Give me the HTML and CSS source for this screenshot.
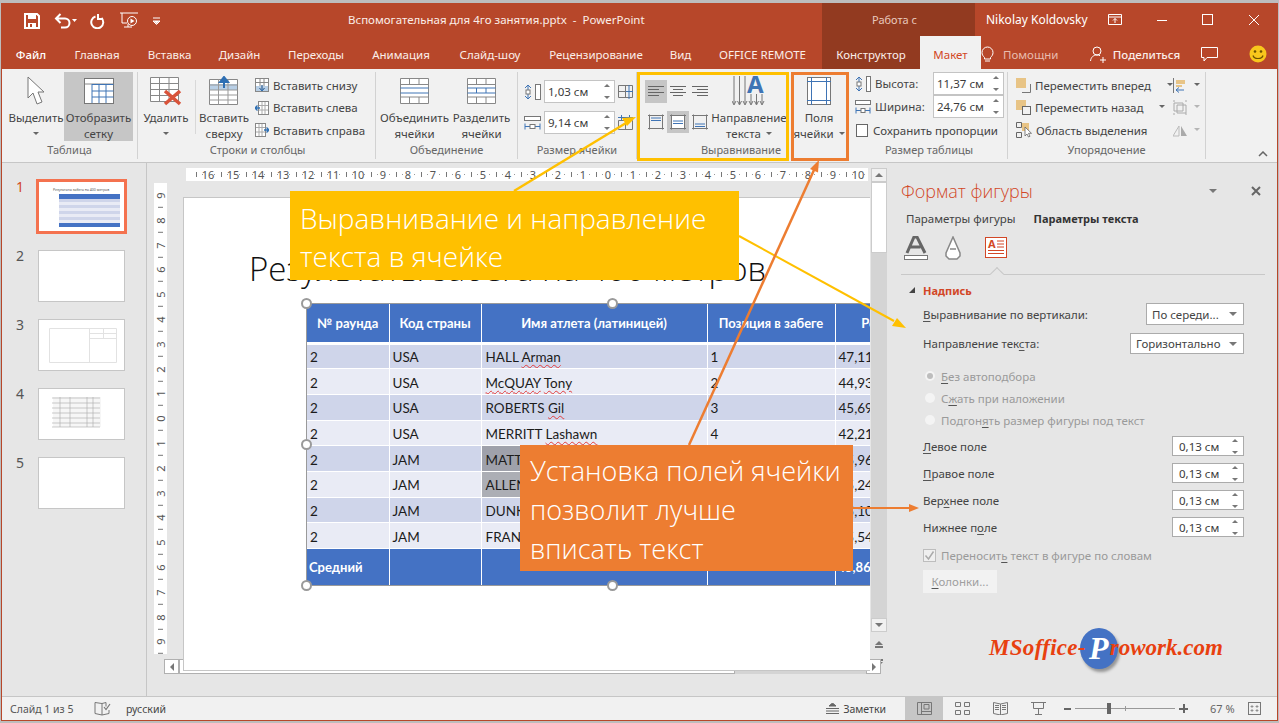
FILE: index.html
```html
<!DOCTYPE html>
<html lang="ru">
<head>
<meta charset="utf-8">
<title>PowerPoint</title>
<link rel="stylesheet" href="styles.css">
</head>
<body>
<div class="window">
  <header class="titlebar">
    <div class="qat">
      <svg class="q-save" width="16" height="16" viewBox="0 0 16 16"><path d="M1 1h12l2 2v12H1z" fill="none" stroke="#fff" stroke-width="2"/><rect x="4" y="1" width="8" height="5" fill="#fff"/><rect x="4" y="10" width="8" height="5" fill="#fff"/><rect x="6" y="11" width="2" height="3" fill="#b7472a"/></svg>
      <svg class="q-undo" width="24" height="16" viewBox="0 0 24 16"><path d="M2 5.5h9a4.500 4.500 0 0 1 0 9H7M6.500 1 2 5.500 6.500 10" fill="none" stroke="#fff" stroke-width="2"/><path d="M20 6h5l-2.500 3z" fill="#fff" transform="translate(-2 0)"/></svg>
      <svg class="q-redo" width="16" height="16" viewBox="0 0 16 16"><path d="M6.500 3.500a6 6 0 1 0 6 1.500M9 1v5H14" fill="none" stroke="#fff" stroke-width="2"/></svg>
      <svg class="q-show" width="18" height="18" viewBox="0 0 18 18"><path d="M0 1h18M2 1v10h5M4 15h8M8 12v3" fill="none" stroke="#fff"/><circle cx="12" cy="9" r="4.500" fill="none" stroke="#fff"/><path d="M10.500 6.500v5l4-2.500z" fill="#fff"/></svg>
      <svg class="q-more" width="8" height="8" viewBox="0 0 8 8"><path d="M0 1h7M0 4h7l-3.500 3.500z" fill="none" stroke="#fff"/><path d="M1 4h5L3.500 7z" fill="#fff"/></svg>
    </div>
    <div class="doc-title">Вспомогательная для 4го занятия.pptx&nbsp; -&nbsp; PowerPoint</div>
    <div class="ctx-title">Работа с таблицами</div>
    <div class="user">Nikolay Koldovsky</div>
    <div class="winbtns">
      <svg width="14" height="12" viewBox="0 0 14 12"><path d="M.500.500h13v10H.500zM.500 3h13M7 9V4.500M5 6.500l2-2 2 2" fill="none" stroke="#fff"/></svg>
      <svg width="12" height="12" viewBox="0 0 12 12"><path d="M1 6.500h10" stroke="#fff"/></svg>
      <svg width="12" height="12" viewBox="0 0 12 12"><rect x=".5" y=".5" width="10" height="10" fill="none" stroke="#fff"/></svg>
      <svg width="12" height="12" viewBox="0 0 12 12"><path d="M1 1l10 10M11 1 1 11" stroke="#fff" fill="none"/></svg>
    </div>
  </header>

  <nav class="tabs">
    <a class="tab tab-file">Файл</a><a class="tab">Главная</a><a class="tab">Вставка</a><a class="tab">Дизайн</a><a class="tab">Переходы</a><a class="tab">Анимация</a><a class="tab">Слайд-шоу</a><a class="tab">Рецензирование</a><a class="tab">Вид</a><a class="tab">OFFICE REMOTE</a>
    <span></span>
    <a class="tab tab-ctx">Конструктор</a><a class="tab tab-active">Макет</a>
    <a class="tab tab-help"><svg width="15" height="17" viewBox="0 0 15 17"><path d="M4.500 11.500C3 10 2 8.800 2 6.500a5.500 5.500 0 0 1 11 0c0 2.300-1 3.500-2.500 5v1.500h-6zM5 15h5" fill="none" stroke="#fff"/></svg><span class="dim">Помощни</span></a>
    <a class="tab tab-share"><svg width="17" height="17" viewBox="0 0 17 17"><circle cx="7" cy="5" r="4" fill="none" stroke="#fff"/><path d="M.5 15c.5-4 3-6 6.500-6 1 0 2 .2 3 .7M10 14h6M13 11v6" fill="none" stroke="#fff"/></svg>Поделиться</a>
    <a class="tab tab-ic"><svg width="17" height="15" viewBox="0 0 17 15"><path d="M.5.5h16v10H6l-3 3.500v-3.500H.5z" fill="none" stroke="#fff"/></svg></a>
    <a class="tab tab-ic"><svg width="18" height="18" viewBox="0 0 18 18"><circle cx="9" cy="9" r="8.500" fill="#f8c71c"/><circle cx="6" cy="6.500" r="1.300" fill="#6b5200"/><circle cx="12" cy="6.500" r="1.300" fill="#6b5200"/><path d="M4 10.500c1 4 9 4 10 0" fill="none" stroke="#6b5200" stroke-width="1.200"/></svg></a>
  </nav>

  <section class="ribbon">
    <div class="group g1">
      <div class="g-body">
        <div class="big w56"><div class="ico"><svg width="18" height="30" viewBox="0 0 18 30"><path d="M1 1v21l5-5 4 11 5-2-4-10h6z" fill="#fff" stroke="#777"/></svg></div><span>Выделить</span><span class="caret"></span></div>
        <div class="big w69 on"><div class="ico"><svg width="30" height="26" viewBox="0 0 30 26"><rect x=".5" y=".5" width="29" height="25" fill="#fff" stroke="#777"/><path d="M.5 6h29" stroke="#888"/><path d="M8 6.500h21.500M8 13h21.500M8 19h21.500M8 6v19M15 6v19M22 6v19" stroke="#3f74b5" fill="none"/></svg></div><span>Отобразить</span><span>сетку</span></div>
      </div>
      <div class="g-label">Таблица</div>
    </div>
    <div class="group g2">
      <div class="g-body">
        <div class="big w52"><div class="ico"><svg width="32" height="30" viewBox="0 0 32 30"><path d="M.5 1.500h28v24H.5zM.5 7.500h28M.5 13.500h28M.5 19.500h28M9.500 1.500v24M19 1.500v24" fill="#fff" stroke="#888"/><path d="M15 15l15 13M30 15 15 28" stroke="#d9533a" stroke-width="3.500"/></svg></div><span>Удалить</span><span class="caret"></span></div>
        <i class="vsep"></i>
        <div class="big w52"><div class="ico"><svg width="30" height="30" viewBox="0 0 30 30"><path d="M.5 3.500h28v25H.5z" fill="#fff" stroke="#888"/><rect x="1" y="8" width="27" height="6" fill="#b8cfe6"/><path d="M.5 9h28M.5 14h28M.5 19h28M.5 24h28M9.500 3.500v25M19 3.500v25" fill="none" stroke="#999"/><path d="M15 12V5M11 6l4-5 4 5z" fill="#2e6fb3" stroke="#2e6fb3" stroke-width="2"/></svg></div><span>Вставить</span><span>сверху</span></div>
        <div class="smalls">
          <div class="s-row"><svg width="14" height="14" viewBox="0 0 14 14"><rect x=".5" y=".5" width="13" height="13" fill="#fff" stroke="#888"/><rect x="1" y="8" width="12" height="5" fill="#b8cfe6"/><path d="M5 1v7M9 1v7M1 4.500h12M7 7v5M4.500 10 7 13l2.500-3" fill="none" stroke="#888"/><path d="M7 7v5M4.500 10 7 13l2.500-3" fill="none" stroke="#2e6fb3"/></svg>Вставить снизу</div>
          <div class="s-row"><svg width="14" height="14" viewBox="0 0 14 14"><rect x="3.500" y=".5" width="10" height="13" fill="#fff" stroke="#888"/><path d="M7 1v12M10 1v12M4 4.500h9M4 9h9" stroke="#aaa" fill="none"/><path d="M0 7h5M2.500 4.500 0 7l2.500 2.500" fill="none" stroke="#2e6fb3" stroke-width="1.300"/></svg>Вставить слева</div>
          <div class="s-row"><svg width="14" height="14" viewBox="0 0 14 14"><rect x=".5" y=".5" width="10" height="13" fill="#fff" stroke="#888"/><path d="M4 1v12M7 1v12M1 4.500h9M1 9h9" stroke="#aaa" fill="none"/><path d="M9 7h5M11.500 4.500 14 7l-2.500 2.500" fill="none" stroke="#2e6fb3" stroke-width="1.300"/></svg>Вставить справа</div>
        </div>
      </div>
      <div class="g-label">Строки и столбцы</div>
    </div>
    <div class="group g3">
      <div class="g-body">
        <div class="big w67"><div class="ico"><svg width="29" height="26" viewBox="0 0 29 26"><path d="M.5.500h28v25H.5zM.5 6.500h28M.5 19h28M9.500.500v6M19 .500v6M9.500 19v6.500M19 19v6.500" fill="#fff" stroke="#888"/><path d="M.5 10h28M.5 15h28" stroke="#3f74b5" fill="none"/></svg></div><span>Объединить</span><span>ячейки</span></div>
        <div class="big w67"><div class="ico"><svg width="29" height="26" viewBox="0 0 29 26"><path d="M.5.500h28v25H.5zM.5 6.500h28M.5 19h28M9.500.500v6M19 .500v6M9.500 19v6.500M19 19v6.500" fill="#fff" stroke="#888"/><path d="M.5 10h28M.5 15h28M9.500 10v5M19 10v5" stroke="#3f74b5" fill="none"/></svg></div><span>Разделить</span><span>ячейки</span></div>
      </div>
      <div class="g-label">Объединение</div>
    </div>
    <div class="group g4">
      <div class="g-stack">
        <div class="cs-row">
          <svg width="17" height="16" viewBox="0 0 17 16"><rect x="11.500" y=".5" width="5" height="15" fill="#fff" stroke="#777"/><path d="M4 1v14M1 4l3-3 3 3M1 12l3 3 3-3" fill="none" stroke="#3f74b5"/><rect x="2" y="6" width="4" height="4" fill="#fff" stroke="#777"/></svg>
          <div class="spin"><span>1,03 см</span><i class="arrows"></i></div>
          <svg width="16" height="16" viewBox="0 0 16 16"><path d="M.5 1.500h14v12H.5zM.5 7.500h7M7.500 1.500v12" fill="none" stroke="#777"/><path d="M11 1v14M8 7.500h7" stroke="#3f74b5" fill="none"/></svg>
        </div>
        <div class="cs-row">
          <svg width="17" height="16" viewBox="0 0 17 16"><rect x=".5" y="1.500" width="16" height="4" fill="#fff" stroke="#777"/><path d="M1 11.500h15M1 8.500v6M16 8.500v6" fill="none" stroke="#3f74b5"/><rect x="6" y="9.500" width="5" height="4" fill="#fff" stroke="#777"/></svg>
          <div class="spin"><span>9,14 см</span><i class="arrows"></i></div>
          <svg width="16" height="16" viewBox="0 0 16 16"><path d="M.5 5.500h14v9H.5zM7.500 5.500v9" fill="none" stroke="#777"/><path d="M0 2.500h15M3.500 0v6M11.500 0v6" stroke="#3f74b5" fill="none"/></svg>
        </div>
      </div>
      <div class="g-label">Размер ячейки</div>
    </div>
    <div class="group g5">
      <div class="g-body">
        <div class="align-grid">
          <div class="al on"><svg width="16" height="12" viewBox="0 0 16 12"><path d="M0 .5h16M0 3.500h11M0 6.500h16M0 9.500h11" stroke="#666"/></svg></div>
          <div class="al"><svg width="16" height="12" viewBox="0 0 16 12"><path d="M0 .5h16M3 3.500h10M0 6.500h16M3 9.500h10" stroke="#666"/></svg></div>
          <div class="al"><svg width="16" height="12" viewBox="0 0 16 12"><path d="M0 .5h16M5 3.500h11M0 6.500h16M5 9.500h11" stroke="#666"/></svg></div>
          <div class="al"><svg width="16" height="16" viewBox="0 0 16 16"><path d="M1.500.500v15M14.500.500v15M0 1.500h16M0 14.500h16" stroke="#777" fill="none"/><path d="M3 4h10M3 6.500h10" stroke="#3f74b5"/></svg></div>
          <div class="al on"><svg width="16" height="16" viewBox="0 0 16 16"><rect x="1.500" y="1.500" width="13" height="13" fill="#fff"/><path d="M1.500.500v15M14.500.500v15M0 1.500h16M0 14.500h16" stroke="#777" fill="none"/><path d="M3 7h10M3 9.500h10" stroke="#3f74b5"/></svg></div>
          <div class="al"><svg width="16" height="16" viewBox="0 0 16 16"><path d="M1.500.500v15M14.500.500v15M0 1.500h16M0 14.500h16" stroke="#777" fill="none"/><path d="M3 10h10M3 12.500h10" stroke="#3f74b5"/></svg></div>
        </div>
        <div class="big w76"><div class="ico"><svg width="34" height="32" viewBox="0 0 34 32"><path d="M2 1v28M7.500 1v28M13 1v28" stroke="#777" fill="none"/><path d="M0 26l2 4 2-4M5.500 26l2 4 2-4M11 26l2 4 2-4M17 26l2 4 2-4M22.500 26l2 4 2-4M28 26l2 4 2-4M19 19v10M24.500 19v10M30 19v10" stroke="#777" fill="none"/><text x="15" y="18" class="a-glyph">A</text></svg></div><span>Направление</span><span>текста <i class="caret inl"></i></span></div>
      </div>
      <div class="g-label g5-label">Выравнивание</div>
    </div>
    <div class="group g6">
      <div class="g-body">
        <div class="big w60"><div class="ico"><svg width="24" height="28" viewBox="0 0 24 28"><rect x=".5" y=".5" width="23" height="27" fill="#fff" stroke="#777"/><path d="M0 4.500h24M0 23.500h24M4.500 0v28M19.500 0v28" stroke="#3f74b5" fill="none"/></svg></div><span>Поля</span><span>ячейки <i class="caret inl"></i></span></div>
      </div>
    </div>
    <div class="group g7">
      <div class="g-stack ts">
        <div class="ts-row"><svg width="16" height="16" viewBox="0 0 16 16"><rect x="11.500" y=".5" width="4" height="15" fill="#fff" stroke="#777"/><path d="M4 1v14M1 4l3-3 3 3M1 12l3 3 3-3" fill="none" stroke="#3f74b5"/><rect x="2" y="6" width="4" height="4" fill="#fff" stroke="#777"/></svg><span class="ts-lab">Высота:</span><div class="spin ts-spin"><span>11,37 см</span><i class="arrows"></i></div></div>
        <div class="ts-row"><svg width="16" height="16" viewBox="0 0 16 16"><rect x=".5" y="1.500" width="15" height="4" fill="#fff" stroke="#777"/><path d="M1 11.500h14M1 8.500v6M15 8.500v6" fill="none" stroke="#3f74b5"/><rect x="6" y="9.500" width="4" height="4" fill="#fff" stroke="#777"/></svg><span class="ts-lab">Ширина:</span><div class="spin ts-spin"><span>24,76 см</span><i class="arrows"></i></div></div>
        <div class="ts-check"><i class="box"></i>Сохранить пропорции</div>
      </div>
      <div class="g-label">Размер таблицы</div>
    </div>
    <div class="group g8">
      <div class="g-stack ar">
        <div class="ar-row"><div class="ar-main"><svg width="15" height="15" viewBox="0 0 15 15"><rect y="0" width="10" height="10" fill="#e8c486"/><path d="M6 14.500h8.500V6" fill="none" stroke="#777"/></svg>Переместить вперед<i class="caret inl m1"></i></div><svg class="ar-ic" width="14" height="15" viewBox="0 0 14 15"><path d="M.5 0v15" stroke="#777"/><rect x="3" y="2" width="9" height="4" fill="#e8c486"/><rect x="3" y="7" width="6" height="2" fill="#e8c486"/><path d="M11 12H3M6 9.500 3 12l3 2.500" fill="none" stroke="#3f74b5"/></svg><i class="caret inl"></i></div>
        <div class="ar-row"><div class="ar-main"><svg width="15" height="15" viewBox="0 0 15 15"><rect y="0" width="10" height="10" fill="#e8c486"/><rect x="6.500" y="6.500" width="8" height="8" fill="#f1f1f1" stroke="#666"/></svg>Переместить назад<i class="caret inl m2"></i></div><svg class="ar-ic" width="14" height="15" viewBox="0 0 14 15"><path d="M1 3h9v8H1zM4 5h9v8H4zM0 1h2M12 1h2M0 14h2M12 14h2" fill="none" stroke="#aaa"/></svg><i class="caret inl pale"></i></div>
        <div class="ar-row"><div class="ar-main"><svg width="16" height="16" viewBox="0 0 16 16"><rect x="6" y="1" width="7" height="8" fill="#e8c486"/><path d="M.5.500h5v5h-5zM.5 10.500h5v5h-5z" fill="none" stroke="#666"/><path d="M9 5v9l2-2 1.500 3 1.500-.7-1.500-3h3z" fill="#fff" stroke="#666" stroke-width=".8"/></svg>Область выделения</div><svg class="ar-ic" width="14" height="15" viewBox="0 0 14 15"><path d="M6 3 0 13h6z" fill="none" stroke="#bbb"/><path d="M8 3l6 10H8z" fill="#aaa"/></svg><i class="caret inl pale"></i></div>
      </div>
      <div class="g-label">Упорядочение</div>
    </div>
    <div class="collapse"><svg width="10" height="6" viewBox="0 0 10 6"><path d="M1 5l4-4 4 4" fill="none" stroke="#666" stroke-width="1.500"/></svg></div>
  </section>

  <main class="workspace">
    <aside class="thumbs">
      <div class="t-row"><span class="t-num active">1</span><div class="thumb sel">
        <svg width="85" height="50" viewBox="0 0 85 50"><text x="9" y="9" class="t-mini">Результаты забега на 400 метров</text><rect x="15" y="12" width="61" height="5" fill="#4472c4"/><rect x="15" y="17" width="61" height="3" fill="#cfd5ea"/><rect x="15" y="20" width="61" height="3" fill="#e9ebf5"/><rect x="15" y="23" width="61" height="3" fill="#cfd5ea"/><rect x="15" y="26" width="61" height="3" fill="#e9ebf5"/><rect x="15" y="29" width="61" height="3" fill="#cfd5ea"/><rect x="15" y="32" width="61" height="3" fill="#e9ebf5"/><rect x="15" y="35" width="61" height="3" fill="#cfd5ea"/><rect x="15" y="38" width="61" height="3" fill="#e9ebf5"/><rect x="15" y="41" width="61" height="4" fill="#4472c4"/></svg>
      </div></div>
      <div class="t-row"><span class="t-num">2</span><div class="thumb"></div></div>
      <div class="t-row"><span class="t-num">3</span><div class="thumb"><svg width="85" height="50" viewBox="0 0 85 50"><path d="M10.500 8.500h67v34h-67zM50.500 8.500v34M50.500 13.500h27M50.500 18.500h27M64.500 8.500v10" fill="none" stroke="#e2e2e2"/></svg></div></div>
      <div class="t-row"><span class="t-num">4</span><div class="thumb"><svg width="85" height="50" viewBox="0 0 85 50"><rect x="14" y="8" width="48" height="30" fill="#f6f6f6"/><path d="M13 9h48M13 14h48M13 19h48M13 24h48M13 29h48M13 34h48M13 38h48M21 8v30M31 8v30M48 8v30M54 8v30" stroke="#aaa" stroke-width=".6"/></svg></div></div>
      <div class="t-row"><span class="t-num">5</span><div class="thumb"></div></div>
    </aside>

    <div class="editor">
      <div class="ruler-h">
        <b>16</b><b>15</b><b>14</b><b>13</b><b>12</b><b>11</b><b>10</b><b>9</b><b>8</b><b>7</b><b>6</b><b>5</b><b>4</b><b>3</b><b>2</b><b>1</b><b>0</b><b>1</b><b>2</b><b>3</b><b>4</b><b>5</b><b>6</b><b>7</b><b>8</b><b>9</b><b>10</b>
      </div>
      <div class="vscroll">
        <div class="vs-btn"><i class="tri up"></i></div>
        <div class="vs-thumb"></div>
        <div class="vs-track"></div>
        <div class="vs-btn"><i class="tri down"></i></div>
        <div class="vs-nav"><i class="tri up"></i><i class="bar"></i></div>
        <div class="vs-nav"><i class="bar"></i><i class="tri down"></i></div>
      </div>
      <div class="ruler-v">
        <b>9</b><b>8</b><b>7</b><b>6</b><b>5</b><b>4</b><b>3</b><b>2</b><b>1</b><b>0</b><b>1</b><b>2</b><b>3</b><b>4</b><b>5</b><b>6</b><b>7</b><b>8</b><b>9</b>
      </div>
      <div class="slide">
        <div class="slide-title">Результаты забега на 400 метров</div>
        <table class="data">
          <colgroup><col class="c1"><col class="c2"><col class="c3"><col class="c4"><col class="c5"></colgroup>
          <thead><tr><th>№ раунда</th><th>Код страны</th><th>Имя атлета (латиницей)</th><th>Позиция в забеге</th><th>Результат</th></tr></thead>
          <tbody>
            <tr><td>2</td><td>USA</td><td>HALL <u>Arman</u></td><td>1</td><td>47,11</td></tr>
            <tr><td>2</td><td>USA</td><td><u>McQUAY</u> <u>Tony</u></td><td>2</td><td>44,93</td></tr>
            <tr><td>2</td><td>USA</td><td>ROBERTS <u>Gil</u></td><td>3</td><td>45,69</td></tr>
            <tr><td>2</td><td>USA</td><td>MERRITT <u>Lashawn</u></td><td>4</td><td>42,21</td></tr>
            <tr><td>2</td><td>JAM</td><td class="cell-a">MATTHEWS</td><td>5</td><td>45,96</td></tr>
            <tr><td>2</td><td>JAM</td><td class="cell-b">ALLEN</td><td>6</td><td>45,24</td></tr>
            <tr><td>2</td><td>JAM</td><td>DUNKLEY</td><td>7</td><td>45,10</td></tr>
            <tr><td>2</td><td>JAM</td><td>FRANCIS</td><td>8</td><td>45,54</td></tr>
          </tbody>
          <tfoot><tr><th>Средний</th><th></th><th></th><th></th><th>45,86</th></tr></tfoot>
        </table>
        <i class="frame"></i>
        <i class="h h-tl"></i><i class="h h-tm"></i><i class="h h-ml"></i><i class="h h-bl"></i><i class="h h-bm"></i>
      </div>
      <div class="hscroll">
        <div class="hs-btn"><i class="tri left"></i></div>
        <div class="hs-thumb"></div>
        <div class="hs-track"></div>
        <div class="hs-btn"><i class="tri right"></i></div>
      </div>
    </div>

    <aside class="panel">
      <div class="p-head"><h2>Формат фигуры</h2><i class="tri down p-tri"></i><svg width="10" height="10" viewBox="0 0 10 10"><path d="M1 1l8 8M9 1 1 9" stroke="#666" stroke-width="2"/></svg></div>
      <div class="p-tabs"><span>Параметры фигуры</span><strong>Параметры текста</strong></div>
      <div class="p-icons">
        <svg width="24" height="24" viewBox="0 0 24 24"><path d="M3 17 10 1h3l8 16M6.500 11h10" fill="none" stroke="#666" stroke-width="3"/><rect x=".5" y="19.500" width="23" height="4" fill="#fff" stroke="#777"/></svg>
        <svg width="16" height="24" viewBox="0 0 16 24"><path d="M8 1 1 17v3l3 3h8l3-3v-3zM5 13h6" fill="#fff" stroke="#888" stroke-width="1.500"/></svg>
        <svg width="22" height="21" viewBox="0 0 22 21"><rect x=".5" y=".5" width="21" height="20" fill="#fff" stroke="#d24726"/><text x="3" y="11" class="a-panel">A</text><path d="M12 4h7M12 7h7M12 10h7M3 13.500h16M3 16.500h16" stroke="#d24726"/></svg>
      </div>
      <div class="p-rule"><i></i></div>
      <div class="p-section"><i class="sec-tri"></i>Надпись</div>
      <div class="p-field f1"><span><u class="k">В</u>ыравнивание по вертикали:</span><div class="sel w98">По середи...<i class="tri down"></i></div></div>
      <div class="p-field f2"><span>Направление тек<u class="k">с</u>та:</span><div class="sel w114">Горизонтально<i class="tri down"></i></div></div>
      <div class="radios">
        <div class="radio"><i class="dot on"></i><span><u class="k">Б</u>ез автоподбора</span></div>
        <div class="radio"><i class="dot"></i><span>С<u class="k">ж</u>ать при наложении</span></div>
        <div class="radio"><i class="dot"></i><span>Подгон<u class="k">я</u>ть размер фигуры под текст</span></div>
      </div>
      <div class="margins">
        <div class="p-field"><span><u class="k">Л</u>евое поле</span><div class="spin p-spin"><span>0,13 см</span><i class="arrows"></i></div></div>
        <div class="p-field"><span><u class="k">П</u>равое поле</span><div class="spin p-spin"><span>0,13 см</span><i class="arrows"></i></div></div>
        <div class="p-field"><span>Вер<u class="k">х</u>нее поле</span><div class="spin p-spin"><span>0,13 см</span><i class="arrows"></i></div></div>
        <div class="p-field"><span>Нижнее п<u class="k">о</u>ле</span><div class="spin p-spin"><span>0,13 см</span><i class="arrows"></i></div></div>
      </div>
      <div class="p-wrap"><i class="chk"><svg width="11" height="11" viewBox="0 0 11 11"><path d="M1.500 5.500 4.500 9 9.500 1.500" fill="none" stroke="#aaa" stroke-width="1.500"/></svg></i><span>Переносит<u class="k">ь</u> текст в фигуре по словам</span></div>
      <div class="p-cols"><u class="k">К</u>олонки...</div>
      <div class="logo"><span class="l1">MSoffice-</span><span class="l-circle">P</span><span class="l2">rowork.com</span></div>
    </aside>
  </main>

  <footer class="status">
    <span class="st-a">Слайд 1 из 5</span>
    <svg class="st-b" width="17" height="14" viewBox="0 0 17 14"><path d="M8 1.500 1 .500v11l7 1.500zM8 1.500l4-1v4M8 13l7-1.500V8" fill="none" stroke="#777"/><path d="M10 5l2 2.500L16 2" fill="none" stroke="#777" stroke-width="1.200"/></svg>
    <span class="st-c">русский</span>
    <span class="st-space"></span>
    <svg width="13" height="11" viewBox="0 0 13 11"><path d="M6.500 0 3 3h7zM0 5.500h13M0 8h13M0 10.500h13" stroke="#666" fill="none"/><path d="M6.500 0 3 3h7z" fill="#666"/></svg>
    <span class="st-notes">Заметки</span>
    <div class="view on"><svg width="15" height="13" viewBox="0 0 15 13"><path d="M.5.500h14v12H.5zM4.500.500v12M4.500 9.500h10M7 2.500h5v4.500H7z" fill="none" stroke="#777"/></svg></div>
    <div class="view"><svg width="15" height="13" viewBox="0 0 15 13"><path d="M.5.500h5v4h-5zM9.500.500h5v4h-5zM.5 8.500h5v4h-5zM9.500 8.500h5v4h-5z" fill="none" stroke="#777"/></svg></div>
    <div class="view"><svg width="15" height="13" viewBox="0 0 15 13"><path d="M.5.500 7.500 2l7-1.500v11l-7 1.500-7-1.500zM7.500 2v11M2 3.500h4M2 5.500h4M2 7.500h4M9 3.500h4M9 5.500h4M9 7.500h4" fill="none" stroke="#777"/></svg></div>
    <div class="view"><svg width="15" height="13" viewBox="0 0 15 13"><path d="M0 .5h15M2.500.500v6h10v-6M7.500 7v5M4 12.500h7" fill="none" stroke="#777"/></svg></div>
    <div class="zoom-bar">
      <i class="z-minus"></i>
      <div class="z-track"><i class="z-mid"></i><i class="z-thumb"></i></div>
      <i class="z-plus"></i>
    </div>
    <span class="st-pct">67 %</span>
    <svg class="st-fit" width="13" height="13" viewBox="0 0 13 13"><rect x=".5" y=".5" width="12" height="12" fill="none" stroke="#777"/><path d="M4 3v3M2.500 4.500h3M9 3v3M7.500 4.500h3M4 7v3M2.500 8.500h3M9 7v3M7.500 8.500h3" stroke="#777" stroke-width=".7"/></svg>
  </footer>

  <div class="callout c-yellow">Выравнивание и направление текста в ячейке</div>
  <div class="callout c-orange">Установка полей ячейки позволит лучше вписать текст</div>
  <i class="hl hl-y"></i>
  <i class="hl hl-o"></i>
  <svg class="arrows-layer" width="1279" height="723" viewBox="0 0 1279 723">
    <path d="M513 191 625 123" stroke="#ffc000" stroke-width="2.500"/><path d="M635 117l-14 1 5 8z" fill="#ffc000"/>
    <path d="M738 236 893 321" stroke="#ffc000" stroke-width="2"/><path d="M905 328l-9-10-5 8z" fill="#ffc000"/>
    <path d="M688 445 813 170" stroke="#ed7d31" stroke-width="2.500"/><path d="M818 160l-9 9 8 3.500z" fill="#ed7d31"/>
    <path d="M852 508h56" stroke="#ed7d31" stroke-width="2"/><path d="M918 508l-10-4v8z" fill="#ed7d31"/>
  </svg>
</div>
</body>
</html>
```

FILE: styles.css
```css
* { box-sizing: border-box; }
html, body { margin: 0; padding: 0; }
body {
  width: 1279px; height: 723px; overflow: hidden;
  background: #bdbdbd;
  font-family: "Noto Sans", "Open Sans", sans-serif;
  font-size: 11.5px; color: #444;
}
i { font-style: normal; display: block; }
svg { display: block; flex: none; }

.window {
  position: relative;
  margin: 3px 1px 0;
  width: 1277px; height: 718px;
  border: 1px solid #b7472a;
  border-top: 0;
  display: flex; flex-direction: column;
  background: #f1f1f1;
}

/* title bar */
.titlebar {
  height: 33px; background: #b7472a; color: #fff; flex: none;
  display: flex; align-items: center; font-size: 11.5px;
}
.qat { display: flex; align-items: center; width: 346px; padding-left: 22px; padding-top: 2px; }
.q-undo { margin-left: 14px; }
.q-redo { margin-left: 11px; }
.q-show { margin-left: 15px; }
.q-more { margin-left: 15px; }
.doc-title { width: 474px; color: #fbeee9; }
.ctx-title { width: 153px; height: 33px; background: #923a20; color: #e9c9bd; line-height: 33px; padding-left: 50px; font-size: 11px; }
.user { width: 133px; padding-left: 11px; font-size: 12px; }
.winbtns { display: flex; align-items: center; gap: 34px; }

/* tabs */
.tabs {
  height: 33px; background: #b7472a; flex: none; color: #fff;
  display: grid;
  grid-template-columns: 58px 74px 71px 69px 84px 86px 92px 120px 49px 115px 2px 98px 61px 100px 108px 48px 44px;
  font-size: 11.5px;
}
.tab { display: flex; align-items: center; justify-content: center; gap: 6px; padding-top: 3px; color: #fbeee9; }
.tab-file { color: #fff; font-weight: 500; }
.tab-ctx { background: #923a20; }
.tab-active { background: #f1f1f1; color: #d24726; }
.dim { color: #e8bcae; }
.tab-help { gap: 8px; justify-content: flex-start; padding-left: 0; margin-left: -1px; padding-left: 0; }
.tab-share { gap: 6px; font-weight: 500; }
.tab-ic { justify-content: flex-start; padding-left: 12px; }

/* ribbon */
.ribbon {
  height: 94px; flex: none; background: #f1f1f1; border-bottom: 1px solid #c6c6c6;
  display: flex; padding-top: 3px; position: relative;
}
.group { display: flex; flex-direction: column; flex: none; height: 87px; border-right: 1px solid #d2d2d2; }
.g-body { flex: 1; display: flex; min-height: 0; }
.g-stack { flex: 1; min-height: 0; }
.g-label { height: 17px; line-height: 16px; text-align: center; color: #666; font-size: 11px; flex: none; }
.g1 { width: 136px; padding-left: 6px; }
.g1 .g-label { padding-right: 6px; }
.g2 { width: 238px; padding-left: 2px; }
.g3 { width: 142px; padding-left: 5px; }
.g3 .g-label { padding-right: 5px; }
.g4 { width: 119px; }
.g5 { width: 152px; border-right: 0; padding-left: 8px; }
.g6 { width: 62px; border-right: 0; }
.g7 { width: 157px; }
.g8 { width: 198px; }

.big { display: flex; flex-direction: column; align-items: center; flex: none; line-height: 16px; height: 69px; white-space: nowrap; }
.big.on { background: #c6c6c6; }
.ico { height: 38px; flex: none; display: flex; align-items: center; justify-content: center; width: 100%; }
.w52 { width: 52px; } .w56 { width: 56px; } .w60 { width: 60px; }
.w67 { width: 67px; } .w69 { width: 69px; } .w76 { width: 76px; }
.caret { width: 0; height: 0; border: 3px solid transparent; border-top: 3.5px solid #666; border-bottom: 0; margin-top: 6px; }
.caret.inl { display: inline-block; margin: 0 0 2px 2px; vertical-align: middle; }
.caret.pale { border-top-color: #b5b5b5; }
.caret.m1 { margin-left: 12px; }
.caret.m2 { margin-left: 12px; }
.vsep { width: 1px; height: 54px; background: #d8d8d8; margin: 8px 2px 0 3px; flex: none; }
.smalls { margin-left: 5px; padding-top: 2px; }
.s-row { height: 22.5px; display: flex; align-items: center; gap: 4px; white-space: nowrap; }

.g4 .g-stack { padding: 8px 0 0 6px; display: flex; flex-direction: column; gap: 8px; }
.g4 .g-label { padding-right: 0; }
.cs-row { display: flex; align-items: center; height: 23px; gap: 3px; }
.spin {
  width: 71px; height: 23px; background: #fff; border: 1px solid #c4c4c4;
  display: flex; align-items: center; justify-content: space-between; padding: 0 4px 0 3px; color: #3b3b3b;
}
.arrows { width: 6px; height: 13px; position: relative; }
.arrows::before, .arrows::after { content: ""; position: absolute; left: 0; border: 3px solid transparent; }
.arrows::before { top: -1px; border-bottom: 3px solid #777; border-top: 0; }
.arrows::after { bottom: -1px; border-top: 3px solid #777; border-bottom: 0; }

.align-grid { display: grid; grid-template-columns: repeat(3, 22px); grid-template-rows: 23px 22px; row-gap: 8px; margin-top: 8px; }
.al { display: flex; align-items: center; justify-content: center; }
.al.on { background: #c6c6c6; }
.g5-label { text-align: right; padding-right: 8px; }
.g6 .big { margin: 0; }

.ts { padding: 0 0 0 4px; }
.ts-row { display: flex; align-items: center; height: 23px; }
.ts-lab { width: 62px; padding-left: 4px; }
.ts-spin { width: 71px; height: 23px; }
.ts-check { display: flex; align-items: center; gap: 5px; height: 24px; margin-top: 0; padding-left: 1px; white-space: nowrap; }
.box { width: 12px; height: 13px; background: #fff; border: 1px solid #666; }

.ar { padding: 2px 0 0 8px; }
.ar-row { display: flex; align-items: center; height: 22.5px; }
.ar-main { width: 157px; display: flex; align-items: center; gap: 4px; white-space: nowrap; }
.ar-ic { margin-right: 5px; }
.collapse { position: absolute; right: 9px; bottom: 5px; }

/* workspace */
.workspace { flex: 1; display: flex; min-height: 0; background: #e6e6e6; }
.thumbs { width: 145px; flex: none; border-right: 1px solid #c6c6c6; padding-top: 18px; }
.t-row { display: flex; height: 69px; padding-left: 14px; }
.t-num { width: 22px; font-size: 14px; line-height: 18px; color: #555; margin-top: -3px; }
.t-num.active { color: #d24726; }
.thumb { width: 87px; height: 52px; background: #fff; border: 1px solid #c6c6c6; }
.thumb.sel { width: 91px; height: 55px; margin: -2px 0 0 -2px; border: 3px solid #f4724f; }
.t-mini { font: 3.500px "Noto Sans", sans-serif; fill: #555; }

.editor {
  width: 741px; flex: none;
  display: grid;
  grid-template-columns: 13px 687px 16px;
  grid-template-rows: 13px 474px 15px;
  column-gap: 0;
  padding: 5px 0 0 7px;
  grid-template-areas: "a top vs" "left slide vs" "left hs hs";
}
.ruler-h {
  grid-column: 2; grid-row: 1; margin-left: 3px; width: 682px; height: 13px; background: #fff;
  display: flex; padding-left: 9.500px; overflow: hidden; font-size: 11px; color: #555; line-height: 13px;
}
.ruler-h b { width: 25px; flex: none; font-weight: 400; text-align: center; position: relative; }
.ruler-h b::before { content: ""; position: absolute; left: 0; top: 4px; height: 5px; width: 1px; background: #777; }
.ruler-h b::after { content: ""; position: absolute; left: 6px; right: 6px; top: 6px; height: 1px;
  background: linear-gradient(90deg, #999 1px, transparent 1px) 0 0 / 13px 1px repeat-x; border-right: 1px solid #999; }
.ruler-v {
  grid-column: 1; grid-row: 2 / 4; width: 13px; height: 471px; margin-top: 2px; background: #fff;
  display: flex; flex-direction: column; padding-top: 0; overflow: hidden; font-size: 11px; color: #555;
}
.ruler-v b { height: 24.800px; flex: none; font-weight: 400; writing-mode: vertical-rl; transform: rotate(180deg); text-align: center; line-height: 13px; position: relative; }
.ruler-v b::before { content: ""; position: absolute; left: 4px; top: 0; height: 1px; width: 5px; background: #777; }

.slide {
  grid-column: 2; grid-row: 2; margin-left: 16px; width: 687px; height: 474px;
  background: #fff; border: 1px solid #c6c6c6; border-right: 0; position: relative; overflow: hidden;
  margin-top: 16px;
}
.editor { grid-template-columns: 13px 703px 17px; grid-template-rows: 13px 490px 15px; }
.ruler-h { margin-left: 19px; }
.vscroll { grid-column: 3; grid-row: 1 / 3; width: 16px; margin-left: 1px; height: 503px; display: flex; flex-direction: column; }
.slide-title {
  position: absolute; left: 65px; top: 48px; width: 540px; white-space: nowrap;
  font-family: "Open Sans", sans-serif; font-weight: 300; font-size: 33px; color: #111; line-height: 46px;
}
table.data {
  position: absolute; left: 123px; top: 106px; width: 640px; border-collapse: collapse; table-layout: fixed;
  font-family: "Lato", "Noto Sans", sans-serif; font-size: 13.500px; color: #1c1c1c;
}
.c1 { width: 82px; } .c2 { width: 92px; } .c3 { width: 226px; } .c4 { width: 128px; } .c5 { width: 112px; }
table.data thead th { height: 39px; background: #4472c4; color: #fff; font-weight: 700; font-size: 13px; text-align: center; border-right: 1px solid #fff; border-bottom: 3px solid #fff; padding: 0 2px; white-space: nowrap; overflow: hidden; }
table.data td { height: 25.700px; padding: 2px 0 0 3px; border-right: 1px solid #fff; border-bottom: 1px solid #fff; white-space: nowrap; overflow: hidden; }
table.data tbody tr:nth-child(odd) td { background: #cfd5ea; }
table.data tbody tr:nth-child(even) td { background: #e9ebf5; }
table.data tbody td:nth-child(3) { padding-left: 4px; }
table.data tfoot th { height: 37px; background: #4472c4; color: #fff; text-align: left; font-size: 13px; padding-left: 2px; border-right: 1px solid #fff; border-top: 1px solid #fff; }
table.data tbody tr:nth-child(n) td.cell-a { background: #9fa1ab; }
table.data tbody tr:nth-child(n) td.cell-b { background: #acaeb5; }
u { text-decoration: underline wavy #e23d3d 1px; text-underline-offset: 2px; }
u.k { text-decoration: underline solid #555 1px; text-underline-offset: 2px; }
.frame { position: absolute; left: 122px; top: 105px; width: 700px; height: 283px; border: 1px solid #9a9a9a; }
.h { position: absolute; width: 11px; height: 11px; border-radius: 50%; background: #fff; border: 2px solid #9a9a9a; }
.h-tl { left: 117px; top: 100px; }
.h-tm { left: 423px; top: 100px; }
.h-ml { left: 117px; top: 241px; }
.h-bl { left: 117px; top: 382px; }
.h-bm { left: 423px; top: 382px; }

.tri { width: 0; height: 0; border: 4px solid transparent; }
.tri.up { border-bottom: 4px solid #777; border-top: 0; }
.tri.down { border-top: 4px solid #777; border-bottom: 0; }
.tri.left { border-right: 4px solid #777; border-left: 0; }
.tri.right { border-left: 4px solid #777; border-right: 0; }
.vs-btn { height: 14px; background: #f1f1f1; border: 1px solid #ccc; display: flex; align-items: center; justify-content: center; flex: none; }
.vs-thumb { height: 71px; background: #fff; border: 1px solid #ccc; flex: none; }
.vs-track { flex: 1; background: #d4d4d4; }
.vs-nav { height: 18px; display: flex; flex-direction: column; align-items: center; justify-content: center; gap: 1px; flex: none; }
.vs-nav .bar { width: 8px; height: 2px; background: #777; }
.vs-btn + .vs-nav { margin-top: 3px; }
.hscroll { grid-column: 2 / 4; grid-row: 3; margin-left: -3px; width: 717px; height: 15px; display: flex; margin-top: -12px; background: #d4d4d4; }
.hs-btn { width: 15px; height: 15px; background: #fff; border: 1px solid #b0b0b0; display: flex; align-items: center; justify-content: center; flex: none; }
.hs-thumb { width: 556px; background: #fff; border: 1px solid #b0b0b0; flex: none; }
.hs-track { flex: 1; }

/* format panel */
.panel { flex: 1; min-width: 0; padding: 15px 12px 0 13px; position: relative; }
.p-head { display: flex; align-items: center; height: 26px; }
.p-head h2 { margin: 0; font-weight: 300; font-family: "Open Sans", sans-serif; font-size: 18px; color: #d24726; width: 308px; white-space: nowrap; }
.p-tri { margin-right: 34px; }
.p-tabs { display: flex; gap: 18px; margin: 6px 0 0 5px; height: 18px; line-height: 18px; color: #444; }
.p-tabs strong { font-weight: 700; color: #333; font-size: 11px; }
.p-icons { display: flex; align-items: flex-end; gap: 17px; margin: 6px 0 0 3px; height: 26px; }
.p-icons svg:nth-child(3) { margin: 0 0 2px 7px; }
.a-panel { font: 700 11px "Noto Sans", sans-serif; fill: #d24726; }
.a-glyph { font: 700 24px "Noto Sans", sans-serif; fill: #3f74b5; }
.p-rule { height: 1px; background: #c8c8c8; margin: 14px 0 0 0; position: relative; width: 364px; }
.p-rule i { position: absolute; left: 91px; top: -5px; width: 10px; height: 10px; background: #e6e6e6; border-left: 1px solid #c8c8c8; border-top: 1px solid #c8c8c8; transform: rotate(45deg); }
.p-section { display: flex; align-items: center; margin: 8px 0 0 8px; height: 14px; color: #d24726; font-weight: 700; font-size: 11px; }
.sec-tri { width: 0; height: 0; border-style: solid; border-width: 0 0 6px 6px; border-color: transparent transparent #444 transparent; margin-right: 8px; }
.p-field { display: flex; align-items: center; justify-content: space-between; margin-left: 22px; width: 321px; }
.f1 { height: 22px; margin-top: 6px; }
.f2 { height: 21px; margin-top: 8px; }
.sel { height: 100%; background: #fff; border: 1px solid #ababab; display: flex; align-items: center; justify-content: space-between; padding: 0 6px 0 5px; }
.w98 { width: 98px; } .w114 { width: 114px; }
.radios { margin: 11px 0 0 24px; color: #9a9a9a; }
.radio { height: 22px; display: flex; align-items: center; gap: 5px; }
.dot { width: 10px; height: 10px; border-radius: 50%; background: #f4f4f4; position: relative; margin-right: 1px; flex: none; margin-left: 0; }
.dot.on::after { content: ""; position: absolute; left: 2px; top: 2px; width: 6px; height: 6px; border-radius: 50%; background: #bdbdbd; }
.margins { margin-top: 5px; display: flex; flex-direction: column; }
.margins .p-field { height: 20px; margin-bottom: 7px; }
.p-spin { height: 20px; width: 72px; padding-right: 5px; padding-left: 6px; border-color: #ababab; }
.p-wrap { display: flex; align-items: center; gap: 5px; margin: 3px 0 0 22px; height: 17px; color: #9a9a9a; }
.chk { width: 13px; height: 13px; border: 1px solid #bdbdbd; background: #efefef; }
.p-cols { margin: 6px 0 0 22px; width: 74px; height: 23px; background: #f2f2f2; color: #a0a0a0; line-height: 23px; text-align: center; }
.logo { position: absolute; left: 101px; top: 463px; width: 250px; height: 44px; display: flex; align-items: center; white-space: nowrap;
  font-family: "Liberation Serif", serif; font-style: italic; font-weight: 700; font-size: 23px; color: #e8400f; }
.l-circle { width: 38px; height: 41px; border-radius: 50%; background: #4472c4; color: #fff; font-size: 32px; text-align: center; line-height: 40px; margin-left: -6px; box-shadow: 2px 3px 3px rgba(0,0,0,.35); flex: none; }
.l2 { margin-left: -8px; position: relative; }
.l1 { position: relative; letter-spacing: .3px; }

/* status */
.status { height: 24px; flex: none; background: #f1f1f1; border-top: 1px solid #c6c6c6; display: flex; align-items: center; font-size: 10.500px; color: #555; }
.st-a { margin-left: 8px; width: 84px; }
.st-b { margin-right: 15px; }
.st-c { color: #444; }
.st-space { flex: 1; }
.st-notes { margin-left: 4px; margin-right: 19px; color: #444; }
.view { width: 38px; height: 23px; display: flex; align-items: center; justify-content: center; }
.view.on { background: #c6c6c6; }
.zoom-bar { display: flex; align-items: center; margin-left: 2px; width: 135px; }
.z-minus { width: 7px; height: 2px; background: #666; margin-left: 5px; }
.z-track { width: 100px; height: 1px; background: #999; margin: 0 4px; position: relative; }
.z-thumb { position: absolute; left: 32px; top: -5px; width: 4px; height: 11px; background: #666; }
.z-mid { position: absolute; left: 50px; top: -2px; width: 1px; height: 5px; background: #999; }
.z-plus { width: 9px; height: 9px; background: linear-gradient(#666,#666) center/100% 2px no-repeat, linear-gradient(#666,#666) center/2px 100% no-repeat; }
.st-pct { margin-left: 16px; width: 38px; color: #666; font-size: 11px; }
.st-fit { margin-right: 16px; }

/* overlays */
.callout { position: absolute; color: #fff; font-family: "Open Sans", sans-serif; font-weight: 300; }
.c-yellow { left: 288px; top: 188px; width: 449px; height: 89px; background: #ffc000; font-size: 28px; line-height: 38px; padding: 8px 10px 0 10px; }
.c-orange { left: 518px; top: 442px; width: 333px; height: 126px; background: #ed7d31; font-size: 27px; line-height: 39px; padding: 6px 8px 0 10px; }
.hl { position: absolute; border: 3px solid #ffc000; top: 69px; height: 89px; }
.hl-y { left: 635px; width: 152px; }
.hl-o { left: 789px; width: 58px; border-color: #ed7d31; }
.arrows-layer { position: absolute; left: -1px; top: -3px; pointer-events: none; }
```
